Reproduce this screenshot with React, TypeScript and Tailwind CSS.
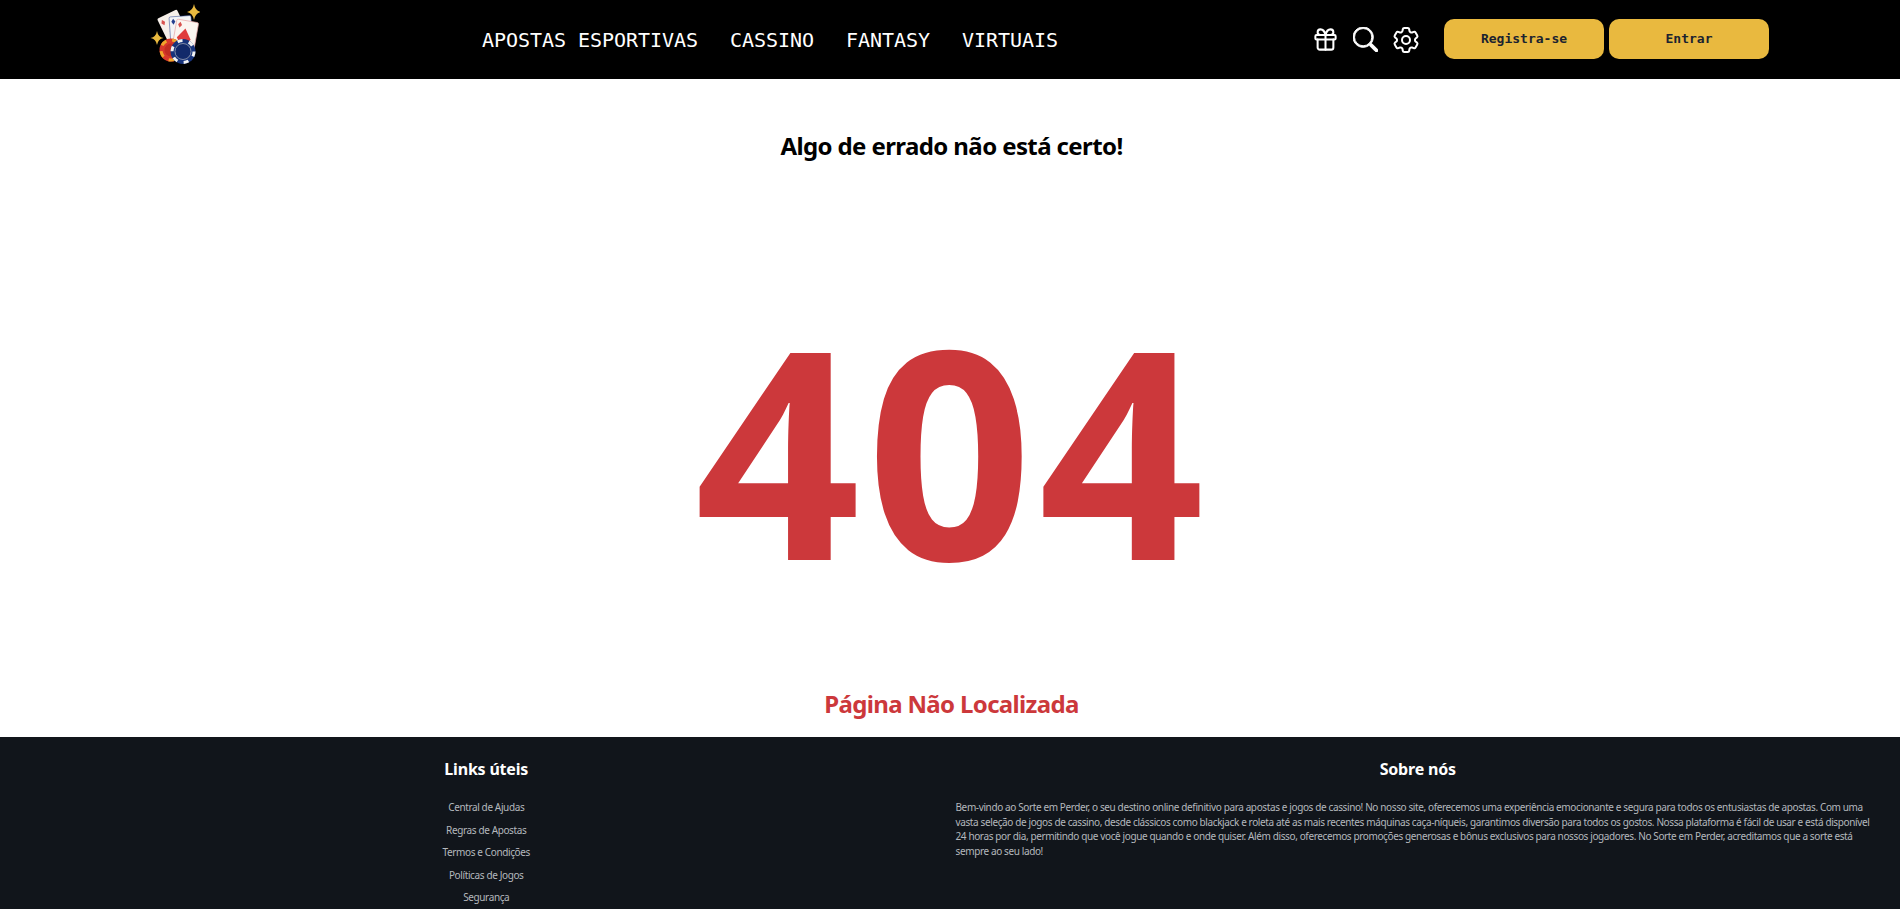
import { Gift } from "lucide-react";
import { BsSearch } from "react-icons/bs";
import { HiOutlineCog6Tooth } from "react-icons/hi2";

function Logo() {
  return (
    <svg width="50" height="62" viewBox="0 0 50 62" className="block mb-[9px]">
      {/* sparkles */}
      <path d="M44 0 Q45.2 6.8 51 8 Q45.2 9.2 44 16 Q42.8 9.2 37 8 Q42.8 6.8 44 0Z" fill="#e9b93f" />
      <path d="M7 27 Q8 33 13.5 34 Q8 35 7 41 Q6 35 .5 34 Q6 33 7 27Z" fill="#e9b93f" />
      {/* cards */}
      <g transform="rotate(-26 7 15)">
        <rect x="7" y="15" width="22" height="30" rx="1.5" fill="#f6efe9" />
        <path d="M11 18l2 3-2 3-2-3z" fill="#d9534f" />
        <path d="M17 26l4 6-4 6-4-6z" fill="#e0534c" />
      </g>
      <g transform="rotate(-4 19 13)">
        <rect x="19" y="13" width="22" height="30" rx="1.5" fill="#f4f4f6" stroke="#25408f" strokeWidth="0.5" />
        <path d="M23 15l2 3-2 3-2-3z" fill="#25408f" />
      </g>
      <g transform="rotate(10 27 15)">
        <rect x="27" y="15" width="22" height="30" rx="1.5" fill="#fbf5f0" stroke="#e8a9a9" strokeWidth="0.7" />
        <path d="M31 17l2 3-2 3-2-3z" fill="#d9534f" />
        <path d="M37 23l7 10-7 10-7-10z" fill="#e03c3c" />
      </g>
      {/* chips */}
      <circle cx="21" cy="46" r="11.5" fill="#d8382c" />
      <circle cx="21" cy="46" r="10" fill="none" stroke="#f0a52a" strokeWidth="3" strokeDasharray="6 6" />
      <circle cx="21" cy="46" r="6.5" fill="#c22c22" />
      <circle cx="33" cy="47.5" r="12.5" fill="#17337c" />
      <circle cx="33" cy="47.5" r="11" fill="none" stroke="#f2f2f2" strokeWidth="3" strokeDasharray="5 6.5" />
      <circle cx="33" cy="47.5" r="8" fill="#12296a" stroke="#9aa1b3" strokeWidth="0.8" />
    </svg>
  );
}

const links = ["Central de Ajudas", "Regras de Apostas", "Termos e Condições", "Políticas de Jogos", "Segurança"];

export default function App() {
  return (
    <div className="min-h-screen bg-white font-['Noto_Sans',sans-serif]">
      <header className="h-[79px] bg-black flex items-center pl-[150px] pr-[131px]">
        <Logo />
        <nav className="flex gap-[32px] ml-[282px] font-['DejaVu_Sans_Mono',monospace] text-[20px] tracking-[-0.04px] text-white">
          <a>APOSTAS ESPORTIVAS</a>
          <a>CASSINO</a>
          <a>FANTASY</a>
          <a>VIRTUAIS</a>
        </nav>
        <div className="flex items-center gap-[14px] ml-auto text-white">
          <Gift className="w-[27px] h-[27px]" strokeWidth={1.8} />
          <BsSearch className="w-[25px] h-[25px] stroke-[0.6px]" />
          <HiOutlineCog6Tooth className="w-[32px] h-[32px] -ml-[2px]" />
        </div>
        <div className="flex gap-[5px] ml-[22px] mb-[1px] font-['DejaVu_Sans_Mono',monospace] text-[13px] font-bold text-[#1b2330]">
          <button className="w-[160px] h-[40px] rounded-[10px] bg-[#e9b93f]">Registra-se</button>
          <button className="w-[160px] h-[40px] rounded-[10px] bg-[#e9b93f]">Entrar</button>
        </div>
      </header>

      <main className="h-[658px] flex flex-col items-center">
        <h2 className="mt-[51px] pl-[3px] text-[24px] leading-[32px] tracking-[-0.6px] font-bold text-black">Algo de errado não está certo!</h2>
        <div className="mt-[116px] pl-[5px] text-[290px] leading-[340px] font-bold text-[#cc383b] tracking-[6px]">404</div>
        <h3 className="mt-[70px] pl-[3px] text-[24px] leading-[32px] tracking-[-0.65px] font-bold text-[#cc383b]">Página Não Localizada</h3>
      </main>

      <footer className="bg-[#11151b] grid grid-cols-2 gap-[5px] pl-[22px] pr-[16px] pt-[20px] h-[172px] overflow-hidden">
        <div className="flex flex-col items-center">
          <h4 className="text-[16px] leading-[24px] tracking-[-0.2px] font-bold text-white">Links úteis</h4>
          <ul className="mt-[15px] text-[10px] tracking-[-0.38px] text-[#b4b8bd] text-center">
            {links.map((l) => (
              <li key={l} className="h-[22.5px] leading-[22.5px]">{l}</li>
            ))}
          </ul>
        </div>
        <div>
          <h4 className="pr-[4px] text-[16px] leading-[24px] tracking-[-0.2px] font-bold text-white text-center">Sobre nós</h4>
          <p className="mt-[19px] pr-[14px] text-[10px] leading-[14.7px] tracking-[-0.38px] text-[#b4b8bd]">
            Bem-vindo ao Sorte em Perder, o seu destino online definitivo para apostas e jogos de cassino! No nosso site, oferecemos uma experiência emocionante e segura para todos os entusiastas de apostas. Com uma vasta seleção de jogos de cassino, desde clássicos como blackjack e roleta até as mais recentes máquinas caça-níqueis, garantimos diversão para todos os gostos. Nossa plataforma é fácil de usar e está disponível 24 horas por dia, permitindo que você jogue quando e onde quiser. Além disso, oferecemos promoções generosas e bônus exclusivos para nossos jogadores. No Sorte em Perder, acreditamos que a sorte está sempre ao seu lado!
          </p>
        </div>
      </footer>
    </div>
  );
}
